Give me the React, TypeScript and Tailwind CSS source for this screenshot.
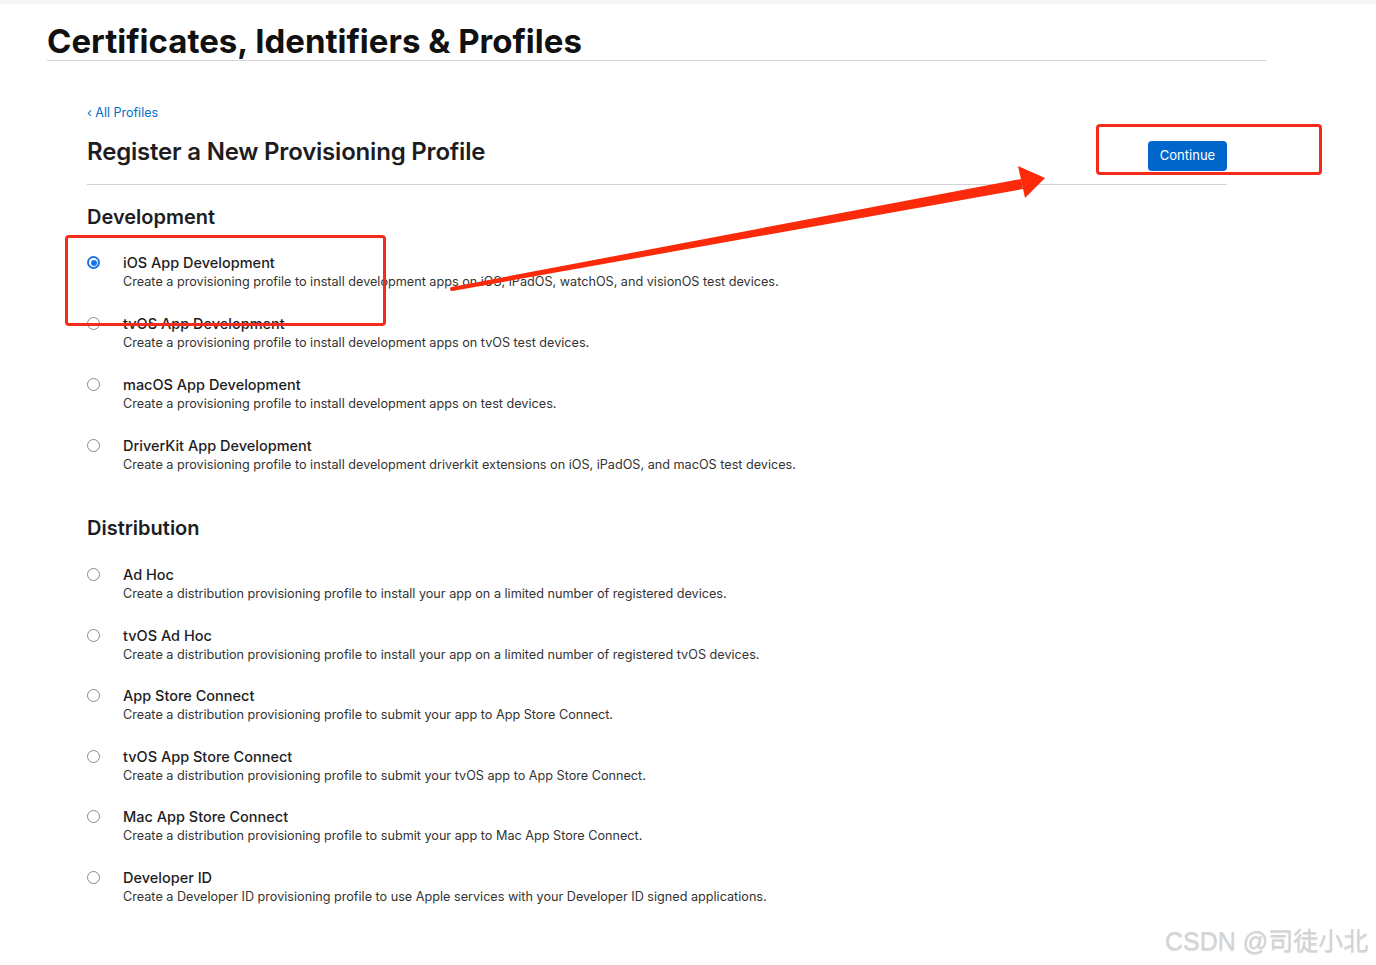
import React from "react";

type Option = { title: string; desc: string; selected?: boolean };

const development: Option[] = [
  {
    title: "iOS App Development",
    desc: "Create a provisioning profile to install development apps on iOS, iPadOS, watchOS, and visionOS test devices.",
    selected: true,
  },
  {
    title: "tvOS App Development",
    desc: "Create a provisioning profile to install development apps on tvOS test devices.",
  },
  {
    title: "macOS App Development",
    desc: "Create a provisioning profile to install development apps on test devices.",
  },
  {
    title: "DriverKit App Development",
    desc: "Create a provisioning profile to install development driverkit extensions on iOS, iPadOS, and macOS test devices.",
  },
];

const distribution: Option[] = [
  {
    title: "Ad Hoc",
    desc: "Create a distribution provisioning profile to install your app on a limited number of registered devices.",
  },
  {
    title: "tvOS Ad Hoc",
    desc: "Create a distribution provisioning profile to install your app on a limited number of registered tvOS devices.",
  },
  {
    title: "App Store Connect",
    desc: "Create a distribution provisioning profile to submit your app to App Store Connect.",
  },
  {
    title: "tvOS App Store Connect",
    desc: "Create a distribution provisioning profile to submit your tvOS app to App Store Connect.",
  },
  {
    title: "Mac App Store Connect",
    desc: "Create a distribution provisioning profile to submit your app to Mac App Store Connect.",
  },
  {
    title: "Developer ID",
    desc: "Create a Developer ID provisioning profile to use Apple services with your Developer ID signed applications.",
  },
];

function Radio({ checked }: { checked?: boolean }) {
  if (checked) {
    return (
      <span className="mt-[2px] flex h-[13px] w-[13px] shrink-0 items-center justify-center rounded-full bg-[#1a73e8]">
        <span className="flex h-[9px] w-[9px] items-center justify-center rounded-full bg-white">
          <span className="h-[6px] w-[6px] rounded-full bg-[#1a73e8]" />
        </span>
      </span>
    );
  }
  return <span className="mt-[2px] h-[13px] w-[13px] shrink-0 rounded-full border border-[#8a8a8a] bg-white" />;
}

function OptionList({ items, gap }: { items: Option[]; gap: string }) {
  return (
    <div className={`flex flex-col ${gap}`}>
      {items.map((o) => (
        <label key={o.title} className="flex items-start gap-[23px]">
          <Radio checked={o.selected} />
          <div>
            <div className="text-[14.5px] font-medium leading-[18px] text-[#1d1d1f]">{o.title}</div>
            <div className="text-[12.65px] leading-[19px] text-[#333]">{o.desc}</div>
          </div>
        </label>
      ))}
    </div>
  );
}

export default function App() {
  return (
    <div className="relative min-h-[965px] bg-white font-['Inter',sans-serif] text-[#1d1d1f]">
      <div className="h-[4px] bg-[#f5f5f7]" />
      <header className="ml-[47px] w-[1219px] border-b border-[#d2d2d7] pt-[19px]">
        <h1 className="text-[33px] font-bold leading-[37px] text-[#111]">
          Certificates, Identifiers &amp; Profiles
        </h1>
      </header>

      <main className="ml-[87px] w-[1140px] pt-[44px]">
        <a className="block text-[12.5px] leading-[16px] text-[#0070c9]">‹ All Profiles</a>
        <div className="mt-[17px] flex items-start justify-between border-b border-[#d2d2d7] pb-[13px]">
          <h2 className="text-[24px] font-semibold leading-[28px] tracking-[-0.2px]">
            Register a New Provisioning Profile
          </h2>
          <button className="mt-[3px] h-[30px] w-[79px] rounded-[4px] bg-[#0066cc] text-[13px] text-white">
            Continue
          </button>
        </div>

        <h3 className="mt-[20px] text-[20px] font-semibold leading-[24px]">Development</h3>
        <div className="mt-[25px]">
          <OptionList items={development} gap="gap-[24px]" />
        </div>

        <h3 className="mt-[42px] text-[20px] font-semibold leading-[24px]">Distribution</h3>
        <div className="mt-[26px]">
          <OptionList items={distribution} gap="gap-[23.6px]" />
        </div>
      </main>

      {/* annotations */}
      <div className="pointer-events-none absolute left-[65px] top-[235px] h-[91px] w-[321px] rounded-[4px] border-[3px] border-[#f42b1a]" />
      <div className="pointer-events-none absolute left-[1096px] top-[124px] h-[51px] w-[226px] rounded-[4px] border-[3px] border-[#f42b1a]" />
      <svg className="pointer-events-none absolute left-0 top-0" width="1376" height="965">
        <polygon points="452.5,291 1023,189 1021,179 451.5,287" fill="#fa2a0a" />
        <polygon points="1045,178 1018,166 1025,198" fill="#fa2a0a" />
        <circle cx="452" cy="289" r="2" fill="#fa2a0a" />
      </svg>

      <div className="absolute left-[1165px] top-[923px] font-['Liberation_Sans','Noto_Sans_CJK_SC',sans-serif] text-[25px] leading-[36px] text-[#d4d4d4] [text-shadow:0_1px_1px_rgba(0,0,0,0.15)]">
        CSDN @司徒小北
      </div>
    </div>
  );
}
